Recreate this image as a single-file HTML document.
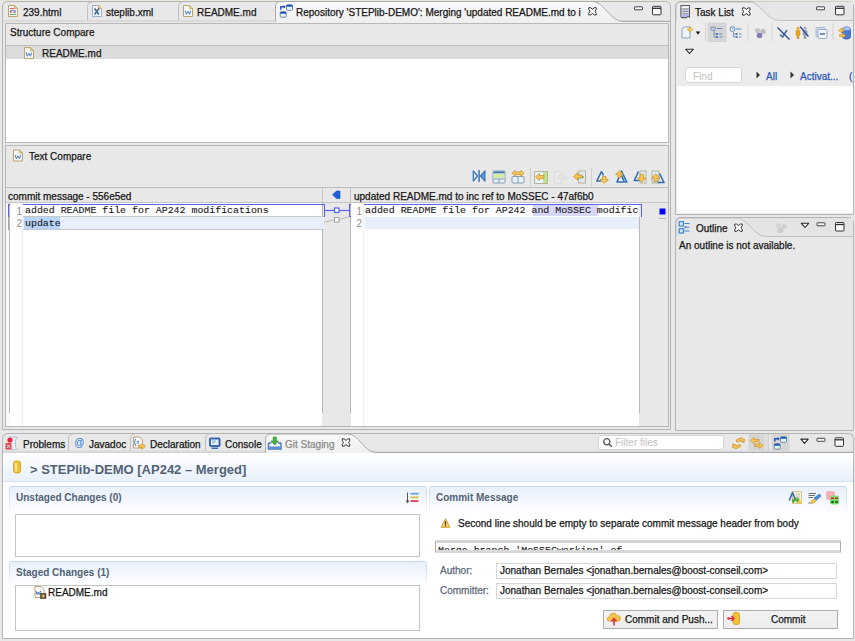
<!DOCTYPE html>
<html><head><meta charset="utf-8">
<style>
*{margin:0;padding:0;box-sizing:border-box}
html,body{width:855px;height:641px;overflow:hidden;background:#e8e8e8;font-family:"Liberation Sans",sans-serif;font-size:10px;color:#161616}
.a{position:absolute}
.t{position:absolute;white-space:nowrap;line-height:12px;font-size:10px;-webkit-text-stroke:0.25px currentColor}
.m{font-family:"Liberation Mono",monospace;font-size:9.92px;-webkit-text-stroke:0.1px currentColor}
.b{font-weight:bold;-webkit-text-stroke:0;color:#526276}
svg{position:absolute;overflow:visible}
.ic{width:16px;height:16px}
.sec{position:absolute;border-radius:3px 3px 0 0;border-top:1px solid #c4d8f0;background:linear-gradient(#e8f0fb,#ffffff)}
.sec:before,.sec:after{content:"";position:absolute;top:2px;width:1px;bottom:0;background:linear-gradient(#c4d8f0,rgba(196,216,240,0))}
.sec:before{left:0}.sec:after{right:0}
</style></head><body>
<div class="a" style="left:0;top:0;width:855px;height:1px;background:#ebe7da"></div>

<!-- ===================== FRAMES (SVG) ===================== -->
<svg style="left:0;top:0" width="855" height="641">
  <defs>
    <linearGradient id="actg" x1="0" y1="0" x2="0" y2="1">
      <stop offset="0" stop-color="#f9f9f9"/><stop offset="1" stop-color="#efefef"/>
    </linearGradient>
    <linearGradient id="band" x1="0" y1="0" x2="0" y2="1">
      <stop offset="0" stop-color="#e6e6e6"/><stop offset="1" stop-color="#cdcdcd"/>
    </linearGradient>
    <linearGradient id="hdrg" x1="0" y1="0" x2="0" y2="1">
      <stop offset="0" stop-color="#ffffff"/><stop offset="1" stop-color="#e6eef9"/>
    </linearGradient>
    <linearGradient id="secg" x1="0" y1="0" x2="0" y2="1">
      <stop offset="0" stop-color="#e9f1fb"/><stop offset="1" stop-color="#ffffff"/>
    </linearGradient>
    <linearGradient id="secb" x1="0" y1="0" x2="0" y2="1">
      <stop offset="0" stop-color="#c4d8f0"/><stop offset="1" stop-color="#c4d8f0" stop-opacity="0"/>
    </linearGradient>
  </defs>

  <!-- editor stack -->
  <path d="M2.5,429.5 L2.5,7 Q2.5,1.5 8,1.5 L665,1.5 Q670.5,1.5 670.5,7 L670.5,429.5 Z" fill="#e8e8e8" stroke="#b4b4b4"/>
  <rect x="3" y="19.5" width="273" height="2" fill="url(#band)"/>
  <path d="M87.5,20 L87.5,6.5 Q87.5,2 92,2" fill="none" stroke="#c0c0c0"/>
  <path d="M178.5,20 L178.5,6.5 Q178.5,2 183,2" fill="none" stroke="#c0c0c0"/>
  <path d="M622,19.5 L670,19.5 L670,21.5 L622,21.5 Z" fill="url(#band)"/>
  <path d="M275.5,23 L275.5,7 Q275.5,1.5 281,1.5 L593,1.5 C604,1.5 610,21.5 623,21.5 L670,21.5 L670,23 Z" fill="url(#actg)"/>
  <path d="M275.5,21.5 L275.5,7 Q275.5,1.5 281,1.5 L593,1.5 C604,1.5 610,21.5 623,21.5 L670,21.5" fill="none" stroke="#aaaaaa"/>

  <!-- task list -->
  <path d="M675.5,214.5 L675.5,7 Q675.5,1.5 681,1.5 L848,1.5 Q853.5,1.5 853.5,7 L853.5,214.5 Z" fill="#ececec" stroke="#b4b4b4"/>
  <path d="M779,20.5 L853,20.5 L853,1.5 L750,1.5 C760,1.5 767,20.5 779,20.5 Z" fill="#e6e6e6"/>
  <path d="M676,20.5 L676,7 Q676,2 681,2 L750,2 C760,2 767,20.5 779,20.5 L853,20.5" fill="none" stroke="#b4b4b4" stroke-width="0.8"/>
  <line x1="676" y1="20.5" x2="853" y2="20.5" stroke="#ececec" stroke-width="0"/>

  <!-- outline -->
  <path d="M675.5,430.5 L675.5,223.5 Q675.5,217.5 681,217.5 L848,217.5 Q853.5,217.5 853.5,223.5 L853.5,430.5 Z" fill="#e8e8e8" stroke="#b4b4b4"/>
  <path d="M766,236.5 L853,236.5 L853,218 L737,218 C747,218 754,236.5 766,236.5 Z" fill="#e4e4e4"/>
  <path d="M676,236.5 L676,223.5 Q676,218 681,218 L737,218 C747,218 754,236.5 766,236.5 L853,236.5" fill="none" stroke="#b4b4b4" stroke-width="0.8"/>

  <!-- git staging -->
  <path d="M2.5,638.5 L2.5,439.5 Q2.5,433.5 8,433.5 L848,433.5 Q853.5,433.5 853.5,439.5 L853.5,638.5 Z" fill="#e8e8e8" stroke="#b4b4b4"/>
  <rect x="3" y="450" width="850" height="3.5" fill="url(#band)"/>
  <path d="M68.5,451 L68.5,439 Q68.5,434 73,434" fill="none" stroke="#c0c0c0"/>
  <path d="M130.5,451 L130.5,439 Q130.5,434 135,434" fill="none" stroke="#c0c0c0"/>
  <path d="M205.5,451 L205.5,439 Q205.5,434 210,434" fill="none" stroke="#c0c0c0"/>
  <path d="M265.5,453 L265.5,439.5 Q265.5,434 271,434 L348,434 C359,434 364,452.5 376,452.5 L853,452.5 L853,453.5 L265.5,453.5 Z" fill="url(#actg)"/>
  <path d="M265.5,453 L265.5,439.5 Q265.5,434 271,434 L348,434 C359,434 364,452.5 376,452.5 L853,452.5" fill="none" stroke="#aaaaaa"/>
</svg>

<!-- ===================== EDITOR TABS ===================== -->
<div class="t" style="left:23px;top:7px">239.html</div>
<div class="t" style="left:106px;top:7px">steplib.xml</div>
<div class="t" style="left:197px;top:7px">README.md</div>
<div class="t" style="left:296px;top:7px">Repository 'STEPlib-DEMO': Merging 'updated README.md to i</div>

<!-- Structure compare panel -->
<div class="a" style="left:5px;top:23px;width:664px;height:120px;border:1px solid #b8b8b8;background:#fff">
  <div class="a" style="left:0;top:0;width:662px;height:22px;background:#e8e8e8;border-bottom:1px solid #bdbdbd"></div>
  <div class="a" style="left:0;top:22px;width:662px;height:13px;background:#dcdcdc"></div>
</div>
<div class="t" style="left:10px;top:27px">Structure Compare</div>
<div class="t" style="left:42px;top:48px">README.md</div>

<!-- Text compare panel -->
<div class="a" style="left:5px;top:145px;width:664px;height:282px;border:1px solid #b8b8b8;background:#fff">
  <div class="a" style="left:0;top:0;width:662px;height:42px;background:#e8e8e8;border-bottom:1px solid #bdbdbd"></div>
</div>
<div class="t" style="left:29px;top:151px">Text Compare</div>
<!-- file header row -->
<div class="a" style="left:6px;top:188px;width:662px;height:15px;background:#e8e8e8;border-bottom:1px solid #c4c4c4"></div>
<div class="a" style="left:322px;top:188px;width:1px;height:15px;background:#c4c4c4"></div>
<div class="a" style="left:350px;top:188px;width:1px;height:15px;background:#c4c4c4"></div>
<div class="t" style="left:8px;top:191px">commit message - 556e5ed</div>
<div class="t" style="left:354px;top:191px">updated README.md to inc ref to MoSSEC - 47af6b0</div>
<!-- panes -->
<div class="a" style="left:6px;top:203px;width:4px;height:223px;background:#f8f8f8"></div>
<div class="a" style="left:9px;top:203px;width:1px;height:210px;background:#b8b8b8"></div>
<div class="a" style="left:22px;top:203px;width:1px;height:223px;background:#f0f0f0"></div>
<div class="a" style="left:322px;top:203px;width:29px;height:223px;background:#e8e8e8"></div>
<div class="a" style="left:322px;top:203px;width:1px;height:210px;background:#b8b8b8"></div>
<div class="a" style="left:350px;top:203px;width:1px;height:210px;background:#b8b8b8"></div>
<div class="a" style="left:363px;top:203px;width:1px;height:223px;background:#f0f0f0"></div>
<div class="a" style="left:639px;top:203px;width:29px;height:223px;background:#e8e8e8"></div>
<div class="a" style="left:639px;top:217px;width:1px;height:196px;background:#b8b8b8"></div>
<div class="a" style="left:23px;top:217px;width:301px;height:13px;background:#e6effb;border-bottom:1px solid #c8c8c8"></div>
<div class="a" style="left:24px;top:217px;width:36px;height:12px;background:#b8d6fb"></div>
<div class="a" style="left:365px;top:217px;width:274px;height:12px;background:#e6effb"></div>
<div class="a" style="left:533px;top:204px;width:65px;height:12px;background:#d8d8f6"></div>
<div class="a" style="left:23px;top:216px;width:301px;height:1px;background:#c8c8c8"></div>
<div class="a" style="left:23px;top:204px;width:302px;height:1px;background:#5563f0"></div>
<div class="a" style="left:324px;top:204px;width:1px;height:13px;background:#5563f0"></div>
<div class="a" style="left:8px;top:204px;width:1px;height:13px;background:#5563f0"></div>
<div class="a" style="left:8px;top:204px;width:2px;height:1px;background:#5563f0"></div>
<div class="a" style="left:8px;top:217px;width:1px;height:13px;background:#a8a8a8"></div>
<div class="a" style="left:8px;top:229px;width:2px;height:1px;background:#a8a8a8"></div>
<div class="a" style="left:364px;top:204px;width:278px;height:1px;background:#5563f0"></div>
<div class="a" style="left:641px;top:204px;width:1px;height:13px;background:#5563f0"></div>
<div class="a" style="left:349px;top:204px;width:1px;height:13px;background:#5563f0"></div>
<div class="a" style="left:349px;top:204px;width:2px;height:1px;background:#5563f0"></div>
<div class="a" style="left:349px;top:216px;width:2px;height:1px;background:#5563f0"></div>
<svg style="left:0;top:0" width="855" height="641">
  <line x1="325" y1="210.5" x2="349" y2="210.5" stroke="#5563f0" stroke-width="1.2"/>
  <rect x="334.5" y="208" width="4.5" height="4.5" fill="#fff" stroke="#5563f0" stroke-width="1.2"/>
  <path d="M324,222 C328,222 330,220 334.5,220 M339,219.5 C343,219 345,217 349,217" fill="none" stroke="#a8a8a8" stroke-width="0.8"/>
  <rect x="334.5" y="217.5" width="4.5" height="4.5" fill="#fff" stroke="#a0a0a0" stroke-width="1"/>
  <path d="M332.5,194.7 L336.5,191 L340,191 L340,198.5 L336.5,198.5 Z" fill="#1c62d6" stroke="#2050b0" stroke-width="0.6"/>
  <rect x="659.5" y="208.5" width="6" height="6" fill="#0000ff"/>
  <line x1="659" y1="218.5" x2="666" y2="218.5" stroke="#b8b8b8"/>
</svg>
<div class="t" style="left:16px;top:206px;width:6px;text-align:right;color:#8e8e8e;-webkit-text-stroke:0">1</div>
<div class="t" style="left:16px;top:218px;width:6px;text-align:right;color:#8e8e8e;-webkit-text-stroke:0">2</div>
<div class="t m" style="left:25px;top:205px">added README file for AP242 modifications</div>
<div class="t m" style="left:25px;top:218px">update</div>
<div class="t" style="left:356px;top:206px;width:6px;text-align:right;color:#8e8e8e;-webkit-text-stroke:0">1</div>
<div class="t" style="left:356px;top:218px;width:6px;text-align:right;color:#8e8e8e;-webkit-text-stroke:0">2</div>
<div class="t m" style="left:365px;top:205px">added README file for AP242 and MoSSEC modific</div>

<!-- ===================== TASK LIST ===================== -->
<div class="t" style="left:695px;top:7px">Task List</div>
<div class="a" style="left:677px;top:86px;width:176px;height:127px;background:#fff"></div>
<div class="a" style="left:685px;top:67px;width:57px;height:16px;background:#fff;border:1px solid #d4d4d4;border-radius:3px"></div>
<div class="t" style="left:693px;top:71px;color:#c0c0c0;-webkit-text-stroke:0">Find</div>
<div class="t" style="left:766px;top:71px;color:#2a55b8">All</div>
<div class="t" style="left:800px;top:71px;color:#2a55b8">Activat...</div>
<div class="t" style="left:849px;top:71px;color:#2a55b8">(</div>

<!-- ===================== OUTLINE ===================== -->
<div class="t" style="left:696px;top:223px">Outline</div>
<div class="t" style="left:679px;top:240px">An outline is not available.</div>

<!-- ===================== GIT STAGING ===================== -->
<div class="t" style="left:23px;top:439px">Problems</div>
<div class="t" style="left:89px;top:439px">Javadoc</div>
<div class="t" style="left:150px;top:439px">Declaration</div>
<div class="t" style="left:225px;top:439px">Console</div>
<div class="t" style="left:285px;top:439px;color:#8c8c8c">Git Staging</div>
<div class="a" style="left:598px;top:435px;width:126px;height:15px;background:#fff;border:1px solid #d4d4d4;border-radius:3px"></div>
<div class="t" style="left:615px;top:437px;color:#c2c2c2;-webkit-text-stroke:0">Filter files</div>

<div class="a" style="left:3px;top:453px;width:850px;height:185px;background:#fff"></div>
<div class="a" style="left:3px;top:453px;width:850px;height:28px;background:linear-gradient(#ffffff,#e8f0fa)"></div>
<div class="a" style="left:3px;top:481px;width:850px;height:1px;background:#d6e4f4"></div>
<div class="t b" style="left:30px;top:462px;font-size:13px;line-height:15px">&gt; STEPlib-DEMO [AP242 – Merged]</div>

<!-- sections -->
<div class="sec" style="left:9px;top:486px;width:418px;height:28px"></div>
<div class="sec" style="left:9px;top:561px;width:418px;height:24px"></div>
<div class="sec" style="left:429px;top:486px;width:418px;height:28px"></div>
<div class="a" style="left:15px;top:514px;width:405px;height:43px;border:1px solid #c4c4c4;background:#fff"></div>
<div class="a" style="left:15px;top:585px;width:405px;height:46px;border:1px solid #c4c4c4;background:#fff"></div>
<div class="t b" style="left:16px;top:492px">Unstaged Changes (0)</div>
<div class="t b" style="left:16px;top:567px">Staged Changes (1)</div>
<div class="t" style="left:48px;top:587px">README.md</div>
<div class="t b" style="left:436px;top:492px">Commit Message</div>
<div class="t" style="left:458px;top:518px">Second line should be empty to separate commit message header from body</div>
<div class="a" style="left:435px;top:540px;width:406px;height:12.5px;border-style:solid;border-color:#d4d4d4 #a8a8a8 #d8d8d8 #a8a8a8;border-width:3px 1px 3px 1px;background:#fff;overflow:hidden;height:12.5px">
  <div class="t m" style="left:2px;top:2px">Merge branch 'MoSSECworking' of</div>
</div>
<div class="t" style="left:440px;top:565px;color:#5a6878">Author:</div>
<div class="t" style="left:440px;top:585px;color:#5a6878">Committer:</div>
<div class="a" style="left:496px;top:563px;width:341px;height:16px;border:1px solid #d6d6d6;background:#fff"></div>
<div class="a" style="left:496px;top:583px;width:341px;height:16px;border:1px solid #d6d6d6;background:#fff"></div>
<div class="t" style="left:500px;top:565px">Jonathan Bernales &lt;jonathan.bernales@boost-conseil.com&gt;</div>
<div class="t" style="left:500px;top:585px">Jonathan Bernales &lt;jonathan.bernales@boost-conseil.com&gt;</div>
<div class="a" style="left:603px;top:610px;width:115px;height:19px;border:1px solid #adadad;background:linear-gradient(#f2f2f2,#ededed)"></div>
<div class="a" style="left:723px;top:610px;width:115px;height:19px;border:1px solid #adadad;background:linear-gradient(#f2f2f2,#ededed)"></div>
<div class="t" style="left:625px;top:614px">Commit and Push...</div>
<div class="t" style="left:771px;top:614px">Commit</div>
<!-- ===================== ICONS ===================== -->
<svg style="left:0;top:0" width="855" height="641">
  <defs>
    <g id="page">
      <path d="M0.5,0.5 H6.5 L9.5,3.5 V11.5 H0.5 Z" fill="#f5f8fd" stroke="#bba56c"/>
      <path d="M6.5,0.5 V3.5 H9.5 Z" fill="#f1d98c" stroke="#c9a54e" stroke-width="0.8"/>
    </g>
    <g id="wpage">
      <use href="#page"/>
      <path d="M2.2,5.5 L3.3,9.3 L4.9,6.3 L6.5,9.3 L7.6,5.5" fill="none" stroke="#4a7cc0" stroke-width="1"/>
    </g>
    <g id="xclose">
      <path d="M1.2,0.8 Q2.8,0.2 4.8,2.4 Q6.8,0.2 8.4,0.8 Q9.4,2 7.4,4.5 Q9.4,7 8.4,8.2 Q6.8,8.8 4.8,6.6 Q2.8,8.8 1.2,8.2 Q0.2,7 2.2,4.5 Q0.2,2 1.2,0.8 Z" fill="#fff" stroke="#222" stroke-width="0.95" stroke-linejoin="round"/>
    </g>
    <g id="minb"><rect x="0.5" y="0.5" width="8" height="3" rx="0.4" fill="#fafafa" stroke="#333" stroke-width="0.9"/></g>
    <g id="maxb"><rect x="0.5" y="0.5" width="8.5" height="8.5" rx="0.8" fill="#fafafa" stroke="#333" stroke-width="1"/><line x1="0.5" y1="2.5" x2="9" y2="2.5" stroke="#333" stroke-width="1.3"/></g>
    <g id="tri"><path d="M0.8,0.8 L8.2,0.8 L4.5,5 Z" fill="#fafafa" stroke="#2a2a2a" stroke-width="1.1" stroke-linejoin="round"/></g>
    <g id="win">
      <rect x="0.5" y="0.5" width="6" height="5.5" rx="1" fill="#dff6fb" stroke="#6c7f95" stroke-width="0.9"/>
      <rect x="0.5" y="0.5" width="6" height="2" rx="0.8" fill="#2358b6"/>
    </g>
    <g id="balls">
      <circle cx="3.5" cy="3.5" r="2.6" fill="#c4c4c4"/><circle cx="9" cy="4.5" r="2.6" fill="#bdbdbd"/><circle cx="5.5" cy="8.5" r="2.8" fill="#8378b8"/>
    </g>
  </defs>

  <!-- editor tabs -->
  <g transform="translate(8,5)">
    <use href="#page"/>
    <rect x="2" y="3" width="4" height="1.2" fill="#e86060"/><rect x="2" y="5" width="6" height="1" fill="#7aa0d0"/>
    <circle cx="2.8" cy="7" r="0.9" fill="#e04040"/><rect x="5" y="6.6" width="3" height="1" fill="#4060a0"/>
    <rect x="2" y="9" width="6" height="1" fill="#60b060"/>
  </g>
  <g transform="translate(92,5)">
    <path d="M0.5,0.5 H6.5 L9.5,3.5 V11.5 H0.5 Z" fill="#f3f7fc" stroke="#9eb0c8"/>
    <path d="M6.5,0.5 V3.5 H9.5 Z" fill="#f1d98c" stroke="#c9a54e" stroke-width="0.8"/>
    <path d="M2.5,3.5 L7,9.5 M7,3.5 L2.5,9.5" stroke="#486a92" stroke-width="1.7"/>
  </g>
  <g transform="translate(183,5)"><use href="#wpage"/></g>
  <g transform="translate(279.5,4)">
    <use href="#win" transform="translate(6.5,0.3)"/>
    <use href="#win" transform="translate(0.2,7.2)"/>
    <path d="M1.3,5.8 L1.3,2.8 L4.5,2.8" fill="none" stroke="#2a58c0" stroke-width="1.5"/>
    <path d="M4,1.2 L6.4,2.8 L4,4.4 Z" fill="#1d47a8"/>
  </g>
  <g transform="translate(587.7,6.8)"><use href="#xclose"/></g>
  <g transform="translate(634,6.3)"><use href="#minb"/></g>
  <g transform="translate(652,5.8)"><use href="#maxb"/></g>

  <!-- structure compare / text compare page icons -->
  <g transform="translate(24,47)"><use href="#wpage"/></g>
  <g transform="translate(13,149.5)"><use href="#wpage"/></g>

  <!-- text compare toolbar -->
  <g transform="translate(472.5,170)">
    <path d="M0.8,1 L5.2,6 L0.8,11 Z" fill="#d8e8f8" stroke="#3a78c0" stroke-width="1.3" stroke-linejoin="round"/>
    <path d="M12.4,1 L8,6 L12.4,11 Z" fill="#6f9fd0" stroke="#3a78c0" stroke-width="1.3" stroke-linejoin="round"/>
    <line x1="6.6" y1="0" x2="6.6" y2="12" stroke="#2f6db5" stroke-width="1.4"/>
  </g>
  <g transform="translate(492.5,170.5)">
    <rect x="0.5" y="0.5" width="12" height="12" rx="0.8" fill="#e3f3fa" stroke="#8a9cb0"/>
    <rect x="1" y="1" width="11" height="2" fill="#3f70b8"/>
    <rect x="1" y="3" width="11" height="5" fill="#d3ecaa"/>
    <line x1="1" y1="8.5" x2="12" y2="8.5" stroke="#8a9cb0"/>
    <line x1="6.5" y1="8.5" x2="6.5" y2="12.5" stroke="#8a9cb0"/>
  </g>
  <g transform="translate(511.5,170)">
    <rect x="0.5" y="6.5" width="12" height="6.5" rx="0.8" fill="#e3f3fa" stroke="#8a9cb0"/>
    <line x1="6.5" y1="6.5" x2="6.5" y2="13" stroke="#8a9cb0"/>
    <path d="M0.5,3.2 L3.5,0.5 V2 H9.5 V0.5 L12.5,3.2 L9.5,6 V4.5 H3.5 V6 Z" fill="#f5cd62" stroke="#c8922a" stroke-width="0.8"/>
  </g>
  <line x1="530.5" y1="168" x2="530.5" y2="186" stroke="#d0d0d0"/>
  <g transform="translate(534,171)">
    <rect x="0.5" y="0.5" width="13" height="12" fill="#e9f3fb" stroke="#b8b49a"/>
    <rect x="9" y="1" width="4" height="11" fill="#bde392"/>
    <path d="M1.5,6 L5.5,2.5 V4.5 H10 V7.5 H5.5 V9.5 Z" fill="#f7c85a" stroke="#c8922a" stroke-width="0.8"/>
  </g>
  <g transform="translate(554,171)" opacity="0.35">
    <rect x="0.5" y="0.5" width="7" height="12" fill="#eef2f4" stroke="#c8c8c8"/>
    <path d="M12.5,6 L8.5,2.5 V4.5 H4 V7.5 H8.5 V9.5 Z" fill="#e0e0e0" stroke="#c0c0c0" stroke-width="0.8"/>
  </g>
  <g transform="translate(573,170.5)">
    <rect x="5.5" y="0.5" width="7" height="12" fill="#dde8f2" stroke="#b8b49a"/>
    <circle cx="9.5" cy="6.5" r="1.3" fill="#6ac040"/>
    <path d="M0.5,6 L4.5,2.5 V4.5 H9 V7.5 H4.5 V9.5 Z" fill="#f7c85a" stroke="#c8922a" stroke-width="0.8"/>
  </g>
  <line x1="591.5" y1="168" x2="591.5" y2="186" stroke="#d0d0d0"/>
  <g transform="translate(596,170.5)">
    <path d="M5.5,1 L0.8,10.5 H5" fill="none" stroke="#2f6db5" stroke-width="1.6" stroke-linejoin="round"/>
    <path d="M5.5,1 L7.5,5" fill="none" stroke="#2f6db5" stroke-width="1.6"/>
    <path d="M6.5,6 H10 V9 H12.5 L8.25,12.8 L4,9 H6.5 Z" fill="#f7c85a" stroke="#c8922a" stroke-width="0.8"/>
  </g>
  <g transform="translate(615,170)">
    <path d="M6.5,1 L11.8,12 H2 Z M6.5,5.5 L9,11" fill="none" stroke="#2f6db5" stroke-width="1.6" stroke-linejoin="round"/>
    <path d="M2.5,7 H5.5 V4 H8 L4,0.3 L0,4 H2.5 Z" fill="#f7c85a" stroke="#c8922a" stroke-width="0.8" transform="translate(0.5,0.5)"/>
  </g>
  <g transform="translate(633.5,170.5)">
    <rect x="6.5" y="0.5" width="6" height="12" fill="#dde8f2" stroke="#b8b49a"/>
    <path d="M5,1 L0.8,10 H6" fill="none" stroke="#2f6db5" stroke-width="1.6" stroke-linejoin="round"/>
    <path d="M6.5,4 H10 V7.5 H12.5 L8.25,11.5 L4,7.5 H6.5 Z" fill="#f7c85a" stroke="#c8922a" stroke-width="0.8"/>
  </g>
  <g transform="translate(651.5,170.5)">
    <rect x="0.5" y="0.5" width="7" height="12" fill="#dde8f2" stroke="#b8b49a"/>
    <path d="M8,3 L12.5,12 H6" fill="none" stroke="#2f6db5" stroke-width="1.6" stroke-linejoin="round"/>
    <path d="M2.5,11 H6 V7.5 H8.5 L4.25,3.5 L0,7.5 H2.5 Z" fill="#f7c85a" stroke="#c8922a" stroke-width="0.8"/>
  </g>

  <!-- task list tab -->
  <g transform="translate(680.3,5)">
    <path d="M0.6,0.6 H9.2 V12 L7.5,11 L6,12.6 H2 Q0.6,12.6 0.6,11 Z" fill="#dcdce6" stroke="#5c5c66" stroke-width="1.1"/>
    <rect x="1.3" y="1.2" width="7.3" height="1.8" fill="#f6f6fc"/>
    <path d="M2.2,4 H8.2 M2.2,6.4 H8.2 M2.2,8.8 H8.2" stroke="#6a6a74" stroke-width="0.8"/>
    <path d="M1.3,9.6 H8.6 V11.5 L7.5,10.8 L6,12 H2.2 Q1.3,12 1.3,11 Z" fill="#b4b4f0"/>
  </g>
  <g transform="translate(741.5,7)"><use href="#xclose"/></g>
  <g transform="translate(816,6.3)"><use href="#minb"/></g>
  <g transform="translate(835,5.8)"><use href="#maxb"/></g>
  <!-- task list toolbar -->
  <g transform="translate(681.5,26.5)">
    <path d="M0.5,2.5 L2.5,0.5 H8.5 V11.5 H0.5 Z" fill="#eef3fb" stroke="#8da3bd"/>
    <path d="M8.5,0 L9.4,2.1 L11.5,3 L9.4,3.9 L8.5,6 L7.6,3.9 L5.5,3 L7.6,2.1 Z" fill="#f4d04a" stroke="#c09020" stroke-width="0.5"/>
  </g>
  <path d="M695.8,31.5 L700.2,31.5 L698,34.8 Z" fill="#111"/>
  <line x1="705.5" y1="23" x2="705.5" y2="41" stroke="#d2d2d2"/>
  <rect x="708" y="23" width="18" height="18.5" fill="#d6d6d6" stroke="#cacaca" stroke-width="0.6"/>
  <g transform="translate(710,26)">
    <path d="M0.5,1.5 H6 L5,4.5 H1.5 Z" fill="#b8cfe8" stroke="#7a94b8" stroke-width="0.8"/>
    <path d="M0.5,1 L3,0 L6,1" fill="#e8a0a0" stroke="none"/>
    <path d="M4,5 V11 H6 M4,8 H6" fill="none" stroke="#6e8cb8" stroke-width="0.9"/>
    <rect x="6" y="7" width="2.2" height="2" fill="#5b7fb8"/><rect x="6" y="10" width="2.2" height="2" fill="#5b7fb8"/>
    <path d="M7,2.5 H12.5 M9.5,8 H12.5 M9.5,11 H12.5" stroke="#5b7fb8" stroke-width="0.9"/>
  </g>
  <g transform="translate(729.5,26)">
    <circle cx="3" cy="3" r="2.5" fill="#e8f0fa" stroke="#5b7fb8" stroke-width="0.9"/>
    <path d="M3,1.5 V3 H4.2" fill="none" stroke="#5b7fb8" stroke-width="0.7"/>
    <path d="M4,6 V11 H6 M4,8 H6" fill="none" stroke="#6e8cb8" stroke-width="0.9"/>
    <rect x="6" y="7" width="2.2" height="2" fill="#5b7fb8"/><rect x="6" y="10" width="2.2" height="2" fill="#5b7fb8"/>
    <path d="M6.5,3 H12 M9.5,8 H12 M9.5,11 H12" stroke="#5b7fb8" stroke-width="0.9"/>
  </g>
  <line x1="748" y1="23" x2="748" y2="41" stroke="#d2d2d2"/>
  <g transform="translate(754,27)"><use href="#balls"/></g>
  <line x1="772" y1="23" x2="772" y2="41" stroke="#d2d2d2"/>
  <g transform="translate(777,27)">
    <path d="M3,7.5 L5.5,10 L10,3" fill="none" stroke="#4a6a92" stroke-width="1.5"/>
    <line x1="0.5" y1="0.5" x2="12.5" y2="12.5" stroke="#2244a0" stroke-width="1.3"/>
  </g>
  <g transform="translate(795,26.5)">
    <circle cx="3" cy="1.8" r="1.6" fill="#f0b020"/><path d="M1,4 H5 V8.5 H4 V12 H2 V8.5 H1 Z" fill="#f0a818" stroke="#c88010" stroke-width="0.5"/>
    <circle cx="10" cy="1.8" r="1.6" fill="#a8b0b8"/><path d="M8,4 H12 V8.5 H11 V12 H9 V8.5 H8 Z" fill="#a0a8b0" stroke="#808890" stroke-width="0.5"/>
    <line x1="5" y1="0" x2="13.5" y2="10" stroke="#2a48a8" stroke-width="1.2"/>
  </g>
  <g transform="translate(815.5,27)">
    <rect x="0.5" y="0.5" width="9" height="9" rx="1" fill="#cfdcec" stroke="#9ab0cc" stroke-width="0.8"/>
    <rect x="2.5" y="2.5" width="9" height="9" rx="1" fill="#f4f8fc" stroke="#8aa4c4" stroke-width="0.9"/>
    <line x1="4.5" y1="7" x2="9.5" y2="7" stroke="#3a6ab0" stroke-width="1.4"/>
  </g>
  <line x1="833" y1="23" x2="833" y2="41" stroke="#d2d2d2"/>
  <g transform="translate(837.5,26.5)">
    <rect x="5" y="0.5" width="8" height="12" rx="3" fill="#4a7ad0" stroke="#2a50a0" stroke-width="0.7"/>
    <ellipse cx="9" cy="2.2" rx="3.5" ry="1.6" fill="#a8c8f0"/>
    <path d="M1,4 L4,1.5 L4,3 H6 V5 H4 V6.5 Z" fill="#f7c85a" stroke="#c8922a" stroke-width="0.6"/>
    <path d="M8,9 L5,11.5 V10 H2 V8 H5 V6.5 Z" fill="#f7c85a" stroke="#c8922a" stroke-width="0.6"/>
  </g>
  <g transform="translate(685,48.5)"><use href="#tri"/></g>
  <path d="M756.5,71.5 L760,75 L756.5,78.5 Z" fill="#333"/>
  <path d="M790.5,71.5 L794,75 L790.5,78.5 Z" fill="#333"/>

  <!-- outline -->
  <g transform="translate(678.5,221)">
    <rect x="0.7" y="0.7" width="4.3" height="4.3" fill="#d6e8f8" stroke="#3f85d0" stroke-width="1.2"/>
    <rect x="0.7" y="7.7" width="4.3" height="4.3" fill="#d6e8f8" stroke="#3f85d0" stroke-width="1.2"/>
    <path d="M6,2.5 H11 M8,6.2 H11 M6,10 H11" stroke="#3f85d0" stroke-width="1.1"/>
    <rect x="6" y="5.3" width="2" height="2" fill="#3f85d0"/>
  </g>
  <g transform="translate(733.7,223.2)"><use href="#xclose"/></g>
  <g transform="translate(775,222)" opacity="0.5"><circle cx="3.5" cy="3.5" r="2.6" fill="#c8c8c8"/><circle cx="9" cy="4.5" r="2.6" fill="#c0c0c0"/><circle cx="5.5" cy="8.5" r="2.8" fill="#b8b8b8"/></g>
  <g transform="translate(800.5,222.5)"><use href="#tri"/></g>
  <g transform="translate(816.5,222.3)"><use href="#minb"/></g>
  <g transform="translate(835,222)"><use href="#maxb"/></g>

  <!-- git staging tabs -->
  <g transform="translate(5,436.5)">
    <path d="M3.5,0.5 H12 V2 L10.5,3 V10.5 L12,12 V13 H6" fill="#e4eef8" stroke="#a8b8cc" stroke-width="0.8"/>
    <circle cx="5" cy="3.5" r="2.6" fill="#e8283a"/>
    <rect x="0.5" y="6.5" width="6" height="6.5" fill="#e04050"/>
    <path d="M2,8 L5,11.5 M5,8 L2,11.5" stroke="#fff" stroke-width="0.9"/>
  </g>
  <text x="74" y="446" font-family="Liberation Sans" font-size="10" fill="#2f80d0" font-style="italic">@</text>
  <g transform="translate(133,436.5)">
    <path d="M0.5,0.5 H6.5 L9.5,3.5 V11.5 H0.5 Z" fill="#f5f8fd" stroke="#bba56c"/>
    <path d="M3,2.5 Q2,2.5 2,4 V5 L1.3,5.7 L2,6.4 V7.5 Q2,9 3,9" fill="none" stroke="#3d6fb6" stroke-width="0.9"/>
    <path d="M3.8,5 H6 M3.8,6.5 H6" stroke="#3d6fb6" stroke-width="0.8"/>
    <path d="M5.5,8.5 H9 V6.8 L12.5,9.8 L9,12.8 V11 H5.5 Z" fill="#f5c550" stroke="#c8922a" stroke-width="0.7"/>
  </g>
  <g transform="translate(209,437.5)">
    <rect x="0.5" y="0.5" width="10.5" height="8.5" rx="1" fill="#3b6dbf" stroke="#24509a" stroke-width="0.8"/>
    <rect x="2" y="2" width="7.5" height="5.5" fill="#e8f0fa"/>
    <path d="M3,3.5 H7 M3,5.2 H6" stroke="#6a8ac0" stroke-width="0.7"/>
    <rect x="2.5" y="10" width="6.5" height="1.5" fill="#3b6dbf"/>
  </g>
  <g transform="translate(268,436.5)">
    <path d="M0.5,6.5 V12.5 H13 V6.5 M0.5,6.5 H3.5 M10,6.5 H13" fill="none" stroke="#4a7cc4" stroke-width="1.5"/>
    <rect x="1.3" y="10" width="11" height="2.2" fill="#5b8bd0"/>
    <path d="M5.2,0.5 H8.3 V4.5 H10.5 L6.75,8.5 L3,4.5 H5.2 Z" fill="#3fb040" stroke="#268a28" stroke-width="0.6"/>
  </g>
  <g transform="translate(341.2,438)"><use href="#xclose"/></g>
  <!-- git staging toolbar -->
  <g transform="translate(603,438)">
    <circle cx="3.8" cy="3.8" r="3.1" fill="none" stroke="#555" stroke-width="1.3"/>
    <line x1="6" y1="6" x2="8.8" y2="8.8" stroke="#555" stroke-width="1.5"/>
  </g>
  <g transform="translate(732,437)">
    <path d="M5,1 L9.5,1 Q12,1 12,4 L13,4 L10.8,7 L8.5,4 L9.5,4 Q9.5,3.2 8.5,3.2 L5,3.2 Z" fill="#f5c550" stroke="#c8922a" stroke-width="0.7" transform="rotate(-30 9 4)"/>
    <path d="M8,11.5 L3.5,11.5 Q1,11.5 1,8.5 L0,8.5 L2.2,5.5 L4.5,8.5 L3.5,8.5 Q3.5,9.3 4.5,9.3 L8,9.3 Z" fill="#f5c550" stroke="#c8922a" stroke-width="0.7" transform="rotate(-30 4 8.5)"/>
  </g>
  <rect x="748.5" y="434" width="16.5" height="17.5" fill="#d6d6d6"/>
  <g transform="translate(750,437)">
    <path d="M0.5,3.5 L4,0.5 V2.3 H9 V4.7 H4 V6.5 Z" fill="#f5c550" stroke="#c8922a" stroke-width="0.7"/>
    <path d="M13,8.5 L9.5,5.5 V7.3 H4.5 V9.7 H9.5 V11.5 Z" fill="#f5c550" stroke="#c8922a" stroke-width="0.7"/>
  </g>
  <line x1="767" y1="434" x2="767" y2="452" stroke="#d0d0d0"/>
  <line x1="768.5" y1="434" x2="768.5" y2="452" stroke="#d0d0d0"/>
  <rect x="771.5" y="434" width="18" height="17.5" fill="#d6d6d6"/>
  <g transform="translate(773.5,436)">
    <use href="#win" transform="translate(6.5,0.3)"/>
    <use href="#win" transform="translate(0.2,7.2)"/>
    <path d="M1.3,5.8 L1.3,2.8 L4.5,2.8" fill="none" stroke="#2a58c0" stroke-width="1.5"/>
    <path d="M4,1.2 L6.4,2.8 L4,4.4 Z" fill="#1d47a8"/>
  </g>
  <g transform="translate(800,438.3)"><use href="#tri"/></g>
  <g transform="translate(816.5,437.8)"><use href="#minb"/></g>
  <g transform="translate(834.5,437.3)"><use href="#maxb"/></g>

  <!-- git staging content icons -->
  <g transform="translate(13,460.5)">
    <rect x="0.5" y="0.5" width="7" height="12" rx="2.5" fill="#f2c230" stroke="#c89a20" stroke-width="0.8"/>
    <rect x="2" y="2" width="2" height="9" rx="1" fill="#fbe890"/>
  </g>
  <g transform="translate(406,492.5)">
    <line x1="1.5" y1="0" x2="1.5" y2="9.5" stroke="#555" stroke-width="1"/>
    <path d="M-0.5,8 L1.5,11 L3.5,8 Z" fill="#555"/>
    <rect x="4.5" y="0.3" width="8" height="1.8" fill="#6aa0d8"/>
    <rect x="4.5" y="4" width="8" height="1.8" fill="#d8c040"/>
    <rect x="4.5" y="7.7" width="8" height="1.8" fill="#d84058"/>
  </g>
  <g transform="translate(789,491)">
    <path d="M3.5,0.5 H12.5 V12.5 H3.5 Z" fill="#f8f2d4" stroke="#cdb878" stroke-width="0.8"/>
    <path d="M6.5,3 H11 M6.5,5 H11 M6.5,7 H11" stroke="#9aa6b4" stroke-width="0.6"/>
    <path d="M0.3,9.5 L3.5,1.5 L6.2,8" fill="none" stroke="#2f6db5" stroke-width="1.6" stroke-linejoin="round"/>
    <path d="M3,9 Q5,6.5 8,8 L8,6.5 L10.5,9 L8,11.5 L8,10 Q5.5,9 4,12 Z" fill="#5cb040" stroke="#3a8a20" stroke-width="0.5"/>
    <rect x="9" y="10" width="3.5" height="2.5" fill="#f0d040"/>
  </g>
  <g transform="translate(808,492.5)">
    <path d="M0.5,1 H8 M0.5,3 H7 M0.5,5 H5" stroke="#707070" stroke-width="1"/>
    <path d="M6,5.5 L11.5,1.5 L13,3.5 L8,8 Z" fill="#4a88d8" stroke="#2a60b0" stroke-width="0.5"/>
    <path d="M3,10.5 Q3,7.5 6,6.5 L8,8 Q7,11 4,11 Z" fill="#f5c550" stroke="#c8922a" stroke-width="0.5"/>
    <line x1="0.5" y1="10.5" x2="3" y2="10.5" stroke="#707070" stroke-width="1"/>
  </g>
  <g transform="translate(826,491)">
    <rect x="0" y="0" width="9" height="9" rx="2" fill="#f8b0b8"/>
    <rect x="4" y="4.5" width="9" height="9" rx="2" fill="#78e070"/>
    <rect x="5" y="6.5" width="3" height="1.5" fill="#e02030"/><rect x="9" y="6.5" width="3" height="1.5" fill="#e02030"/>
    <circle cx="6.5" cy="11" r="1.3" fill="#106010"/><circle cx="10.5" cy="11" r="1.3" fill="#106010"/>
  </g>
  <g transform="translate(440.5,518)">
    <path d="M5,0.7 L9.5,9.3 H0.5 Z" fill="#f8d060" stroke="#c89a30" stroke-width="0.9" stroke-linejoin="round"/>
    <rect x="4.4" y="3.3" width="1.2" height="3.3" fill="#333"/>
    <rect x="4.4" y="7.3" width="1.2" height="1.2" fill="#333"/>
  </g>
  <g transform="translate(34.5,586)">
    <path d="M0.5,0.5 H6.5 L9.5,3.5 V11.5 H0.5 Z" fill="#f5f8fd" stroke="#bba56c"/>
    <path d="M1.5,5 L2.5,8.5 L3.8,6 L5,8.5 L6,5" fill="none" stroke="#3d6fb6" stroke-width="1"/>
    <rect x="6" y="7.5" width="5.5" height="5" fill="#5a4a30" stroke="#3a2a10" stroke-width="0.5"/>
    <path d="M7,10 H10.5 M8.75,8.3 V11.7" stroke="#f0e0a0" stroke-width="0.9"/>
  </g>
  <g transform="translate(607,612)">
    <path d="M2,9 Q0,9 0.3,6.5 Q0.8,4.8 2.5,5 Q2.5,1.5 6,1 Q9,0.8 10,3.5 Q13.5,3.5 13.5,6.5 Q13.5,9 11,9 Z" fill="#f7c54a" stroke="#d09a20" stroke-width="0.7"/>
    <path d="M7,13.5 V8.5 M4.5,9.5 L7,6.5 L9.5,9.5" fill="none" stroke="#e03040" stroke-width="1.6"/>
  </g>
  <g transform="translate(727,612)">
    <rect x="6" y="0.5" width="6.5" height="12" rx="2.2" fill="#f2c230" stroke="#c89a20" stroke-width="0.8"/>
    <path d="M0.5,6.5 H6.5 M4.5,4 L7,6.5 L4.5,9" fill="none" stroke="#e03040" stroke-width="1.5"/>
    <circle cx="1.5" cy="6.5" r="1.2" fill="#e03040"/>
  </g>
</svg>
</body></html>
